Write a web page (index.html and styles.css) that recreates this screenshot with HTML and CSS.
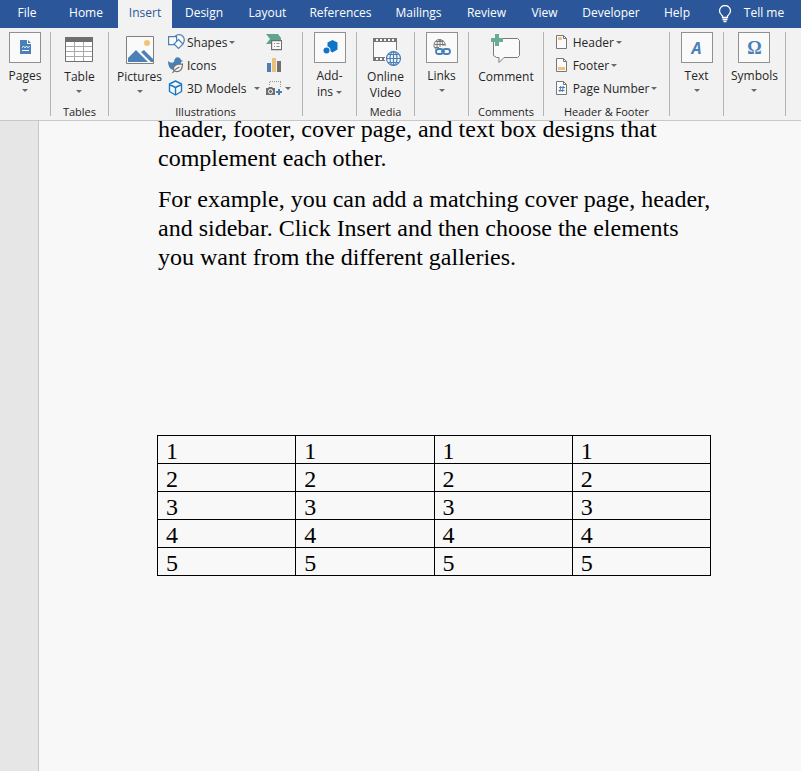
FILE: index.html
```html
<!DOCTYPE html>
<html lang="en">
<head>
<meta charset="utf-8">
<title>Document</title>
<link rel="stylesheet" href="styles.css">
</head>
<body>
<nav class="tabs" aria-label="Ribbon tabs">
  <button class="tab">File</button>
  <button class="tab">Home</button>
  <button class="tab tab-active">Insert</button>
  <button class="tab">Design</button>
  <button class="tab">Layout</button>
  <button class="tab">References</button>
  <button class="tab">Mailings</button>
  <button class="tab">Review</button>
  <button class="tab">View</button>
  <button class="tab">Developer</button>
  <button class="tab">Help</button>
  <button class="tab tell">
    <svg width="14" height="18" viewBox="0 0 14 18" fill="none" stroke="#fff" stroke-width="1.3"><path d="M4.500 12.500V11C3 9.500 1.500 8.500 1.500 6a5.500 5.500 0 0 1 11 0c0 2.500-1.500 3.500-3 5v1.500zM4.500 14.500h5M5.500 16.500h3"/></svg>
    <span>Tell me</span>
  </button>
</nav>

<div class="ribbon">
  <section class="group">
    <button class="big">
      <span class="box"><svg width="30" height="29" viewBox="0 0 30 29"><path d="M10 7h7v4h4v10H10z" fill="#4a7fb8"/><path d="M18 7l3 3h-3z" fill="#4a7fb8"/><path d="M12 14.500l1.500-1 1.500 1 1.500-1 1.500 1 1.500-1M12 17.500h7" fill="none" stroke="#fff"/></svg></span>
      <span>Pages</span><i class="arrow"></i>
    </button>
  </section>

  <section class="group">
    <button class="big">
      <svg width="30" height="32" viewBox="0 0 30 32"><path d="M1.500 5.500h27v24h-27z" fill="#fff"/><path d="M1 14.500h28M1 19.500h28M1 24.500h28M10.500 10v19M19.500 10v19" stroke="#aaa"/><path d="M1.500 5.500h27v24h-27z" fill="none" stroke="#6f6f6f"/><path d="M1 5h28v5H1z" fill="#6f6f6f"/></svg>
      <span>Table</span><i class="arrow"></i>
    </button>
    <h2>Tables</h2>
  </section>

  <section class="group">
    <div class="illustrations">
      <button class="big">
        <svg width="30" height="32" viewBox="0 0 30 32"><path d="M1.500 4.500h27v27h-27z" fill="#fafafa" stroke="#808080"/><circle cx="22" cy="11" r="3" fill="#f0c674"/><path d="M3 30v-4l8-8 12 12zM16 20l3-2 9 9v3h-2z" fill="#4a7fb8"/></svg>
        <span>Pictures</span><i class="arrow"></i>
      </button>
      <div class="rows">
        <button class="small"><svg width="17" height="17" viewBox="0 0 17 17" fill="#fafafa" stroke="#4a7fb8" stroke-width="1.200"><circle cx="11" cy="6" r="5.300"/><path d="M.6 2.600h8v8h-8z"/><path d="M10.500 5.500l4.500 4.500-4.500 4.500L6 10z"/></svg><span>Shapes</span><i class="arrow"></i></button>
        <button class="small"><svg width="17" height="17" viewBox="0 0 17 17"><path d="M0 4c2 2 4 2 6 1 0-6 6-6 7-2l2 1-2 1c0 5-4 8-7 8-4 0-6-4-6-9z" fill="#4a7fb8"/><path d="M5.500 13c-1-5 3-6 9-6 0 5-2 8-7 7.500zM4.500 16c2-3 4-5 7-6" fill="#f5f5f5" stroke="#6f6f6f" stroke-width="1.200"/></svg><span>Icons</span></button>
        <button class="small"><svg width="17" height="17" viewBox="0 0 17 17" fill="#fafafa" stroke="#1878c8" stroke-width="1.400" stroke-linejoin="round"><path d="M7.500 1l6 3v7.500l-6 3.500-6-3.500V4zM1.500 4.500l6 3 6-3M7.500 7.500V15"/></svg><span>3D Models</span><i class="arrow arrow-far"></i></button>
      </div>
      <div class="rows">
        <button class="small" aria-label="SmartArt"><svg width="16" height="17" viewBox="0 0 16 17"><path d="M0 0h12l3 4v2H5v4H0l4-5z" fill="#5fa58c"/><path d="M5.600 6.600h10v9h-10z" fill="#fafafa" stroke="#6f6f6f" stroke-width="1.200"/><path d="M8 9.500h1M10.500 9.500h3M8 12.500h1M10.500 12.500h3" stroke="#888"/></svg></button>
        <button class="small" aria-label="Chart"><svg width="16" height="17" viewBox="0 0 16 17"><path d="M1 6h4v9H1z" fill="#4a7fb8"/><path d="M6 1h4v14H6z" fill="#e8c27c"/><path d="M11 4h4v11h-4z" fill="#6f6f6f"/></svg></button>
        <button class="small" aria-label="Screenshot"><svg width="17" height="17" viewBox="0 0 17 17"><path d="M4 1.500h11M3.500 2v4M14.500 2v6" stroke="#999" stroke-dasharray="1 1"/><path d="M0 8h2l1-1h3l1 1h2v7H0z" fill="#6f6f6f"/><circle cx="4.500" cy="11.500" r="2" fill="none" stroke="#fff"/><path d="M13 9v6M10 12h6" stroke="#4a7fb8" stroke-width="2"/></svg><i class="arrow"></i></button>
      </div>
    </div>
    <h2>Illustrations</h2>
  </section>

  <section class="group">
    <button class="big">
      <span class="box"><svg width="30" height="29" viewBox="0 0 30 29"><path d="M17.500 7l5 2.500v7l-5 3-5-3v-7z" fill="#0f74c8"/><circle cx="11.500" cy="17.500" r="4" fill="#fafafa"/><circle cx="11.500" cy="17.500" r="3" fill="#0f74c8"/></svg></span>
      <span>Add-<br>ins <i class="arrow"></i></span>
    </button>
  </section>

  <section class="group">
    <button class="big">
      <svg class="overflowing" width="30" height="32" viewBox="-1 0 30 32"><path d="M2.500 6.500h23v22h-23z" fill="#fafafa"/><path d="M2.500 6v23M25.500 6v12M2 6.500h24M2 9.500h24M2 25.500h12M2 28.500h12" stroke="#777" fill="none"/><path d="M3 8h23M3 27h11" stroke="#777" stroke-width="3" stroke-dasharray="2 2"/><circle cx="22.500" cy="26.500" r="8.500" fill="#f5f5f5"/><g fill="none" stroke="#4a7fb8" stroke-width="1.200"><circle cx="22.500" cy="26.500" r="7"/><ellipse cx="22.500" cy="26.500" rx="3.500" ry="7"/><path d="M15.500 26.500h14M17 22.500h11M17 30.500h11M22.500 19.500v14"/></g></svg>
      <span>Online<br>Video</span>
    </button>
    <h2>Media</h2>
  </section>

  <section class="group">
    <button class="big">
      <span class="box"><svg width="30" height="29" viewBox="0 0 30 29" fill="none"><g stroke="#777"><path d="M10 17a5.500 5.500 0 1 1 8-4M7.500 11.500h11M8.500 8.500h8M8 14.500h4M13 6v8"/><path d="M11 16c-2-4-1-8 2-9 2 1 3 3 3 6"/></g><g stroke="#4a7fb8" stroke-width="1.800"><rect x="9" y="16" width="7" height="5" rx="2.500"/><rect x="16" y="16" width="7" height="5" rx="2.500"/><path d="M14 18.500h4"/></g></svg></span>
      <span>Links</span><i class="arrow"></i>
    </button>
  </section>

  <section class="group">
    <button class="big">
      <svg width="30" height="32" viewBox="0 0 30 32"><path d="M4.500 6.500h22l2 2v15l-2 2H13l-5 5v-5H5.500l-3-2v-15z" fill="#fafafa" stroke="#7a7a7a"/><path d="M4 2h4v4h4v4H8v4H4v-4H0V6h4z" fill="#6aab95"/></svg>
      <span>Comment</span>
    </button>
    <h2>Comments</h2>
  </section>

  <section class="group">
    <div class="rows rows-header">
      <button class="small"><svg width="12" height="15" viewBox="0 0 12 15"><path d="M.5.500h7l3 3v10H.500z" fill="#fafafa" stroke="#777"/><path d="M7.500.500v3h3" fill="none" stroke="#777"/><path d="M2 2h4v3H2z" fill="#edc47a"/></svg><span>Header</span><i class="arrow"></i></button>
      <button class="small"><svg width="12" height="15" viewBox="0 0 12 15"><path d="M.5.500h7l3 3v10H.500z" fill="#fafafa" stroke="#777"/><path d="M7.500.500v3h3" fill="none" stroke="#777"/><path d="M2 9h7v3H2z" fill="#edc47a"/></svg><span>Footer</span><i class="arrow"></i></button>
      <button class="small"><svg width="12" height="15" viewBox="0 0 12 15"><path d="M.5.500h7l3 3v10H.500z" fill="#fafafa" stroke="#777"/><path d="M7.500.500v3h3" fill="none" stroke="#777"/><path d="M4.800 5l-1 6M7.300 5l-1 6M3 6.500h6M2.500 9.500h6" stroke="#4a7fb8"/></svg><span>Page Number</span><i class="arrow"></i></button>
    </div>
    <h2>Header &amp; Footer</h2>
  </section>

  <section class="group">
    <button class="big">
      <span class="box"><b class="glyph glyph-a">A</b></span>
      <span>Text</span><i class="arrow"></i>
    </button>
  </section>

  <section class="group">
    <button class="big">
      <span class="box"><b class="glyph">Ω</b></span>
      <span>Symbols</span><i class="arrow"></i>
    </button>
  </section>
</div>

<main class="workspace">
  <article class="page">
    <p>header, footer, cover page, and text box designs that complement each other.</p>
    <p>For example, you can add a matching cover page, header, and sidebar. Click Insert and then choose the elements you want from the different galleries.</p>
    <table>
      <tr><td>1</td><td>1</td><td>1</td><td>1</td></tr>
      <tr><td>2</td><td>2</td><td>2</td><td>2</td></tr>
      <tr><td>3</td><td>3</td><td>3</td><td>3</td></tr>
      <tr><td>4</td><td>4</td><td>4</td><td>4</td></tr>
      <tr><td>5</td><td>5</td><td>5</td><td>5</td></tr>
    </table>
  </article>
</main>
</body>
</html>
```
FILE: styles.css
```css
* { box-sizing: border-box; }

body {
  margin: 0;
  min-height: 100vh;
  display: flex;
  flex-direction: column;
  font: 12px/16px "Open Sans", "Noto Sans", sans-serif;
  color: #262626;
  background: #f8f8f8;
}

button {
  margin: 0;
  padding: 0;
  border: 0;
  background: none;
  font: inherit;
  color: inherit;
  white-space: nowrap;
}

svg { display: block; flex: none; }
.overflowing { overflow: visible; }

.tabs {
  display: grid;
  grid-template-columns: 54px 64px 54px 64px 63px 83px 73px 63px 53px 80px 52px 96px;
  height: 28px;
  background: #2b579a;
  color: #fff;
}

.tab { padding-bottom: 2px; }
.tab-active { background: #f2f2f2; color: #2b579a; }

.tell {
  display: flex;
  align-items: center;
  justify-content: center;
  gap: 12px;
  padding-bottom: 0;
}
.tell span { padding-bottom: 2px; }

.ribbon {
  display: grid;
  grid-template-columns: 51px 58px 194px 54px 58px 54px 75px 126px 54px 62px;
  height: 93px;
  padding: 4px 0;
  background: #f2f2f2;
  border-bottom: 1px solid #c8c8c8;
}

.group {
  display: flex;
  flex-direction: column;
  align-items: center;
  justify-content: space-between;
  border-right: 1px solid #b4b4b4;
}

.group h2 {
  margin: 0;
  font-size: 11px;
  font-weight: 400;
  line-height: 8px;
  white-space: nowrap;
}

.big {
  display: flex;
  flex-direction: column;
  align-items: center;
}
.big > svg { margin-bottom: 5px; }

.box {
  display: flex;
  align-items: center;
  justify-content: center;
  width: 32px;
  height: 31px;
  margin-bottom: 5px;
  border: 1px solid #919191;
  background: #fafafa;
}

.arrow {
  display: inline-block;
  flex: none;
  border: 3px solid transparent;
  border-top-color: #6a6a6a;
  border-bottom: 0;
}
.big > .arrow { margin-top: 5px; }
.big span .arrow { vertical-align: 2px; }

.illustrations {
  display: flex;
  align-self: flex-start;
  gap: 6px;
  padding-left: 8px;
}

.rows {
  display: flex;
  flex-direction: column;
  margin-top: -1px;
}

.small {
  display: flex;
  align-items: center;
  gap: 2px;
  height: 23px;
}
.arrow-far { margin-left: 5px; }
.rows-header .small { gap: 5px; }
.rows-header .arrow { margin-left: -3px; }

.glyph { font: bold 18px/20px "Liberation Serif", serif; color: #4a7fb8; }
.glyph-a { font: italic bold 16px/20px "Open Sans", sans-serif; }

.workspace {
  flex: 1;
  display: flex;
  padding-left: 38px;
  overflow: hidden;
  background: #e6e6e6;
}

.page {
  flex: 1;
  margin-top: -6px;
  padding: 0 90px 0 118px;
  border-left: 1px solid #c6c6c6;
  background: #f8f8f8;
  font: 24px/29px "Liberation Serif", serif;
  color: #000;
}

.page p { margin: 0 0 12px; max-width: 560px; padding-left: 1px; }

.page table {
  width: 554px;
  max-width: 100%;
  margin-top: 163px;
  border-collapse: collapse;
  table-layout: fixed;
}

.page td {
  height: 28px;
  padding: 4px 8px 0;
  border: 1px solid #000;
  line-height: 23px;
}
```
